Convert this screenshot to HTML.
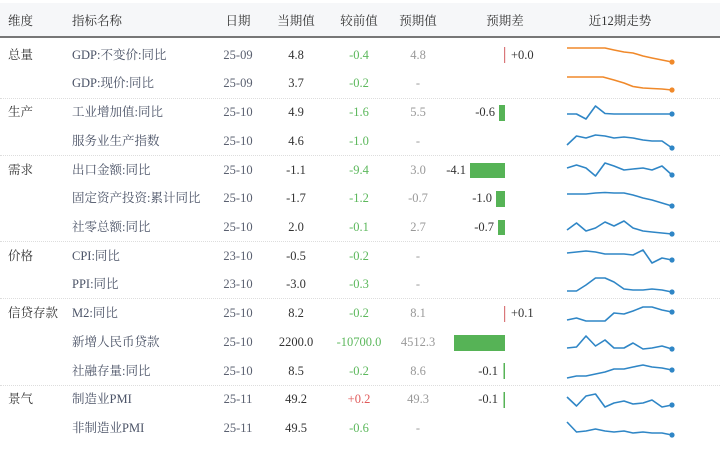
<!DOCTYPE html>
<html><head><meta charset="utf-8"><style>
*{margin:0;padding:0;box-sizing:border-box}
body{width:720px;height:450px;background:#fff;position:relative;overflow:hidden;font-family:"Liberation Serif","Noto Serif CJK SC",serif;font-size:12.5px;color:#333}
.hd{position:absolute;left:0;top:3px;width:720px;height:35px;background:#f6f7f9;border-bottom:2px solid #777}
.t{position:absolute;white-space:nowrap;line-height:16px;transform:translateY(-8px)}
.c{transform:translate(-50%,-8px)}
.r{transform:translate(-100%,-8px)}
.n{color:#4a5266}
.d{color:#5a6070}
.g{color:#5cb85c}
.red{color:#e05a5a}
.e{color:#999}
.sep{position:absolute;left:0;width:720px;border-top:1px dotted #ddd}
</style></head><body>
<div class="hd"></div>
<div class="t" style="left:8px;top:21px">维度</div>
<div class="t" style="left:72px;top:21px">指标名称</div>
<div class="t c" style="left:238px;top:21px">日期</div>
<div class="t c" style="left:296px;top:21px">当期值</div>
<div class="t c" style="left:359px;top:21px">较前值</div>
<div class="t c" style="left:418px;top:21px">预期值</div>
<div class="t c" style="left:505px;top:21px">预期差</div>
<div class="t c" style="left:620px;top:21px">近12期走势</div>

<div class="sep" style="top:98px"></div>
<div class="sep" style="top:155px"></div>
<div class="sep" style="top:241px"></div>
<div class="sep" style="top:298px"></div>
<div class="sep" style="top:385px"></div>

<!-- dims -->
<div class="t" style="left:8px;top:55px">总量</div>
<div class="t" style="left:8px;top:112px">生产</div>
<div class="t" style="left:8px;top:170px">需求</div>
<div class="t" style="left:8px;top:256px">价格</div>
<div class="t" style="left:8px;top:313px">信贷存款</div>
<div class="t" style="left:8px;top:399px">景气</div>

<!-- names -->
<div class="t n" style="left:72px;top:55px">GDP:不变价:同比</div>
<div class="t n" style="left:72px;top:83px">GDP:现价:同比</div>
<div class="t n" style="left:72px;top:112px">工业增加值:同比</div>
<div class="t n" style="left:72px;top:141px">服务业生产指数</div>
<div class="t n" style="left:72px;top:170px">出口金额:同比</div>
<div class="t n" style="left:72px;top:198px">固定资产投资:累计同比</div>
<div class="t n" style="left:72px;top:227px">社零总额:同比</div>
<div class="t n" style="left:72px;top:256px">CPI:同比</div>
<div class="t n" style="left:72px;top:284px">PPI:同比</div>
<div class="t n" style="left:72px;top:313px">M2:同比</div>
<div class="t n" style="left:72px;top:342px">新增人民币贷款</div>
<div class="t n" style="left:72px;top:371px">社融存量:同比</div>
<div class="t n" style="left:72px;top:399px">制造业PMI</div>
<div class="t n" style="left:72px;top:428px">非制造业PMI</div>

<!-- dates -->
<div class="t c d" style="left:238px;top:55px">25-09</div>
<div class="t c d" style="left:238px;top:83px">25-09</div>
<div class="t c d" style="left:238px;top:112px">25-10</div>
<div class="t c d" style="left:238px;top:141px">25-10</div>
<div class="t c d" style="left:238px;top:170px">25-10</div>
<div class="t c d" style="left:238px;top:198px">25-10</div>
<div class="t c d" style="left:238px;top:227px">25-10</div>
<div class="t c d" style="left:238px;top:256px">23-10</div>
<div class="t c d" style="left:238px;top:284px">23-10</div>
<div class="t c d" style="left:238px;top:313px">25-10</div>
<div class="t c d" style="left:238px;top:342px">25-10</div>
<div class="t c d" style="left:238px;top:371px">25-10</div>
<div class="t c d" style="left:238px;top:399px">25-11</div>
<div class="t c d" style="left:238px;top:428px">25-11</div>

<!-- current -->
<div class="t c" style="left:296px;top:55px">4.8</div>
<div class="t c" style="left:296px;top:83px">3.7</div>
<div class="t c" style="left:296px;top:112px">4.9</div>
<div class="t c" style="left:296px;top:141px">4.6</div>
<div class="t c" style="left:296px;top:170px">-1.1</div>
<div class="t c" style="left:296px;top:198px">-1.7</div>
<div class="t c" style="left:296px;top:227px">2.0</div>
<div class="t c" style="left:296px;top:256px">-0.5</div>
<div class="t c" style="left:296px;top:284px">-3.0</div>
<div class="t c" style="left:296px;top:313px">8.2</div>
<div class="t c" style="left:296px;top:342px">2200.0</div>
<div class="t c" style="left:296px;top:371px">8.5</div>
<div class="t c" style="left:296px;top:399px">49.2</div>
<div class="t c" style="left:296px;top:428px">49.5</div>

<!-- prev -->
<div class="t c g" style="left:359px;top:55px">-0.4</div>
<div class="t c g" style="left:359px;top:83px">-0.2</div>
<div class="t c g" style="left:359px;top:112px">-1.6</div>
<div class="t c g" style="left:359px;top:141px">-1.0</div>
<div class="t c g" style="left:359px;top:170px">-9.4</div>
<div class="t c g" style="left:359px;top:198px">-1.2</div>
<div class="t c g" style="left:359px;top:227px">-0.1</div>
<div class="t c g" style="left:359px;top:256px">-0.2</div>
<div class="t c g" style="left:359px;top:284px">-0.3</div>
<div class="t c g" style="left:359px;top:313px">-0.2</div>
<div class="t c g" style="left:359px;top:342px">-10700.0</div>
<div class="t c g" style="left:359px;top:371px">-0.2</div>
<div class="t c red" style="left:359px;top:399px">+0.2</div>
<div class="t c g" style="left:359px;top:428px">-0.6</div>

<!-- expected -->
<div class="t c e" style="left:418px;top:55px">4.8</div>
<div class="t c e" style="left:418px;top:83px">-</div>
<div class="t c e" style="left:418px;top:112px">5.5</div>
<div class="t c e" style="left:418px;top:141px">-</div>
<div class="t c e" style="left:418px;top:170px">3.0</div>
<div class="t c e" style="left:418px;top:198px">-0.7</div>
<div class="t c e" style="left:418px;top:227px">2.7</div>
<div class="t c e" style="left:418px;top:256px">-</div>
<div class="t c e" style="left:418px;top:284px">-</div>
<div class="t c e" style="left:418px;top:313px">8.1</div>
<div class="t c e" style="left:418px;top:342px">4512.3</div>
<div class="t c e" style="left:418px;top:371px">8.6</div>
<div class="t c e" style="left:418px;top:399px">49.3</div>
<div class="t c e" style="left:418px;top:428px">-</div>

<!-- diff labels -->
<div class="t" style="left:511px;top:55px">+0.0</div>
<div class="t r" style="left:495px;top:112px">-0.6</div>
<div class="t r" style="left:466px;top:170px">-4.1</div>
<div class="t r" style="left:492px;top:198px">-1.0</div>
<div class="t r" style="left:494px;top:227px">-0.7</div>
<div class="t" style="left:511px;top:313px">+0.1</div>
<div class="t r" style="left:498px;top:371px">-0.1</div>
<div class="t r" style="left:498px;top:399px">-0.1</div>

<svg style="position:absolute;left:0;top:0" width="720" height="450">
<g fill="#56b356">
<rect x="499" y="105" width="6" height="16"/>
<rect x="470" y="163" width="35" height="15"/>
<rect x="496" y="191" width="9" height="16"/>
<rect x="498" y="220" width="7" height="15"/>
<rect x="454" y="335" width="51" height="16"/>
<rect x="503.5" y="363" width="1.5" height="16"/>
<rect x="503.5" y="392" width="1.5" height="16"/>
</g>
<g fill="#d9777a">
<rect x="504" y="47" width="1.2" height="16"/>
<rect x="504" y="306" width="1.2" height="16"/>
</g>
<g fill="none" stroke-width="1.6" stroke-linejoin="round">
<polyline stroke="#f0892a" points="567,48 576.5,48 586,48 595.5,48 605,48 614,50 624,52 633,53 643,56 652,58 662,60 672,62"/>
<polyline stroke="#f0892a" points="567,77 576.5,77 586,77 595.5,77 603,77 614,80 624,83 633,86.5 643,88 652,88.5 662,89 672,90"/>
<g stroke="#2f86c6">
<polyline points="567,114 576.5,114 586,119 595.5,106 605,113.5 614,114 624,114 633,114 643,114 652,114 662,114 672,114"/>
<polyline points="567,145 576.5,136 586,138 595.5,135 605,136 614,138 624,137 633,138 643,140 652,141 662,141 672,148"/>
<polyline points="567,168 576.5,165 586,168 595.5,176 605,163 614,166 624,170 633,169 643,168 652,170 662,166 672,175"/>
<polyline points="567,194 576.5,194 586,194 595.5,193 605,192.5 614,193 624,193 633,195 643,198 652,200 662,203 672,206"/>
<polyline points="567,230 576.5,223 586,231 595.5,228 605,222 614,226 624,221 633,228 643,231 652,232 662,233 672,234"/>
<polyline points="567,253 576.5,252 586,251 595.5,252 605,254 614,254 624,254 633,255 643,250 652,263 662,258 672,260"/>
<polyline points="567,291 576.5,291 586,285 595.5,278 605,278 614,282 624,289 633,290 643,290 652,289 662,290 672,292"/>
<polyline points="567,320 576.5,318 586,321 595.5,321 605,321 614,313 624,314 633,311 643,307 652,307 662,310 672,312"/>
<polyline points="567,348 576.5,347 586,336 595.5,346 605,340 614,348 624,348 633,343 643,349 652,348 662,346 672,349"/>
<polyline points="567,378 576.5,376 586,376 595.5,374 605,372 614,369 624,369 633,367 643,365 652,367 662,368 672,370"/>
<polyline points="567,397 576.5,406 586,396 595.5,394 605,407 614,403 624,401 633,404 643,403 652,400 662,407 672,405"/>
<polyline points="567,422 576.5,432 586,431 595.5,429 605,431 614,432 624,431 633,433 643,432 652,433 662,433 672,435"/>
</g>
</g>
<g fill="#f0892a"><circle cx="672" cy="62" r="2.6"/><circle cx="672" cy="90" r="2.6"/></g>
<g fill="#2f86c6">
<circle cx="672" cy="114" r="2.6"/><circle cx="672" cy="148" r="2.6"/><circle cx="672" cy="175" r="2.6"/><circle cx="672" cy="206" r="2.6"/><circle cx="672" cy="234" r="2.6"/><circle cx="672" cy="260" r="2.6"/><circle cx="672" cy="292" r="2.6"/><circle cx="672" cy="312" r="2.6"/><circle cx="672" cy="349" r="2.6"/><circle cx="672" cy="370" r="2.6"/><circle cx="672" cy="405" r="2.6"/><circle cx="672" cy="435" r="2.6"/>
</g>
</svg>
</body></html>
